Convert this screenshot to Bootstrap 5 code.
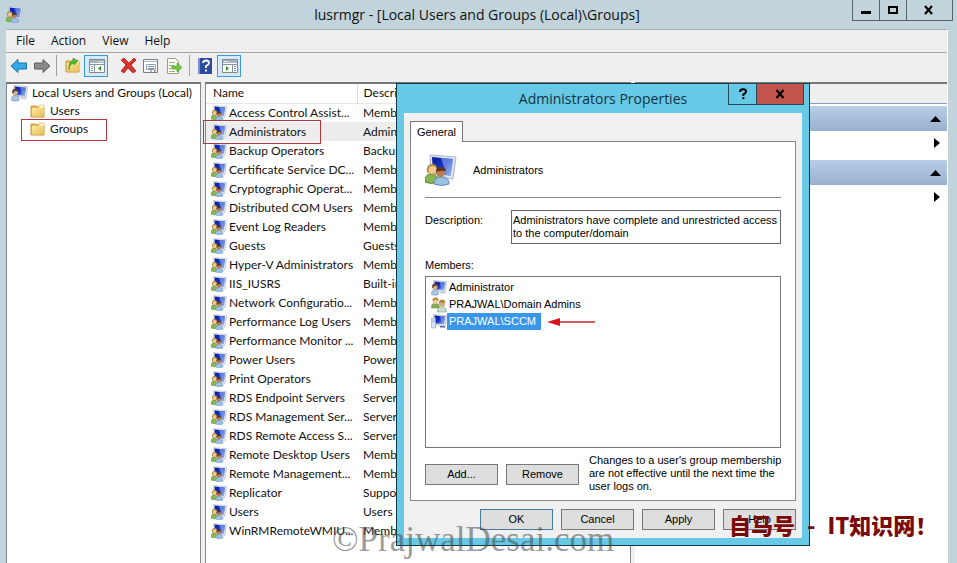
<!DOCTYPE html>
<html lang="en">
<head>
<meta charset="utf-8">
<meta name="viewport" content="width=device-width, initial-scale=1">
<title>lusrmgr</title>
<link href="https://cdn.jsdelivr.net/npm/bootstrap@5.3.0/dist/css/bootstrap.min.css" rel="stylesheet">
<style>
body{font-family:"Open Sans","Noto Sans",sans-serif;font-size:12px;line-height:18px;color:#111;background:#c1d4db;min-height:100vh}
button{font:inherit;color:inherit}
svg{display:block;flex:none}
.frame{padding:0 9px 0 6px}
.titlebar{height:29px;padding-right:17px}
.titlebar h1{font-size:14px;line-height:29px;font-weight:400}
.winbtns{position:absolute;right:4px;top:0}
.winbtns button{height:21px;width:28px;border:1px solid #56656b;border-top:0;margin-left:-1px;background:transparent;padding:0}
.winbtns button:last-child{width:47px}
.chrome{background:#efefef;border-top:1px solid #a4b2b8;border-right:1px solid #fff}
.menus{height:23px;border-bottom:1px solid #a5a5a5;gap:16px;padding-left:10px}
.menus button,.tools button{background:none;border:0;padding:0}
.tools{height:25px;margin-bottom:4px;padding:0 4px}
.tools button{width:23px;height:22px}
.tools .on{background:#d5ebfa;border:1px solid #3c9adb;width:24px}
.vsep{width:1px;height:21px;background:#a0a0a0}
.panes{background:#efefef;gap:4px;border-right:1px solid #fff}
.pane{background:#fff;border:1px solid #828790;border-bottom:0;border-top:2px solid #777}
.tree,.groups table{font-family:Lato,"Open Sans",sans-serif;font-size:12px;white-space:nowrap}
.tree{width:195px}
.tree ul{padding-left:4px}
.tree li a,.groups a{color:inherit;text-decoration:none}
.tree li a{gap:4px;height:18px}
.tree .leaf{margin-left:19px}
.redbox{outline:1px solid #b5363c}
.picked{margin-left:11px;margin-right:94px;height:20px}
.tree .picked .leaf{margin-left:8px}
.groups{width:426px}
.groups table{width:100%;table-layout:fixed;border-collapse:collapse}
.groups th{height:19px;font-weight:400;padding:0 0 0 7px;border-right:1px solid #dcdcdc;border-bottom:1px solid #e6e6e6}
.groups th+th{padding-left:6px}
.groups td{height:19px;padding:0 0 0 6px;white-space:nowrap;overflow:hidden}
.groups td:first-child{padding-left:5px}
.groups .cur{background:#ededed}
.callout{position:absolute;left:203px;top:120px;width:118px;height:24px;border:1px solid #b5363c;pointer-events:none}
.namecell{gap:2px;height:16px}
.actions{min-width:0}
.acthead{height:20px;background:#efefef;border-bottom:1px solid #8d9cb0;margin-bottom:2px}
.actbar{height:25px;background:linear-gradient(#b9cde6,#98b0cf)}
.actrow{height:29px;padding-bottom:5px}
.actbar button,.actrow button{border:0;background:none;padding:0 6px}
.dlg{position:absolute;left:396px;top:83px;width:414px;background:#67c9e5;border:1px solid #12394a;padding:0 7px 7px;font-family:"Liberation Sans",Arial,sans-serif;font-size:11px;line-height:13px;color:#000}
.dlg h2{font-family:"Open Sans","Noto Sans",sans-serif;font-size:14px;line-height:29px;height:29px;margin:0;color:#12333f}
.dlgbtns{position:absolute;top:-1px;right:5px}
.dlgbtns button{height:22px;width:29px;border:1px solid #264a57;background:transparent;margin-left:-1px;padding:0}
.dlgbtns button:last-child{width:48px;background:#c2564c}
.dlgbtns svg{margin:auto}
.dlgbody{background:#f0f0f0;padding:8px 6px}
.tab{width:53px;height:21px;background:#fff;border:1px solid #777;border-bottom:0;margin-bottom:-1px;position:relative;padding:0}
.sheet{background:#fff;border:1px solid #888;padding:11px 14px 7px}
.rule{height:1px;background:#888;margin:10px 0 12px}
.sheet textarea{width:270px;height:34px;border:1px solid #666;resize:none;padding:3px 0 3px 1px;font:inherit;line-height:13px;overflow:hidden;white-space:pre;border-radius:0;color:#000}
.mlabel{margin-top:15px}
.members{height:172px;border:1px solid #777;padding:2px 5px}
.members li{height:17px;gap:2px}
.members .sel{background:#3897ea;color:#fff;height:17px;line-height:17px;width:94px;padding-left:2px;margin-left:-2px}
.pbtn{width:73px;height:21px;background:#dedede;border:1px solid #777;padding:0;color:#000}
.pbtn.def{border-color:#4b7b9c}
.note{margin:-10px -8px 0 2px}
.mark1{position:absolute;left:332px;top:521px;font:35px/38px "Liberation Serif",serif;color:rgba(70,70,70,.55);white-space:nowrap}
.mark2{position:absolute;left:729px;top:510px;gap:12px;font:900 22px/28px "Noto Sans CJK SC",sans-serif;color:#7b0a0a;white-space:nowrap}
</style>
<script src="https://cdn.jsdelivr.net/npm/bootstrap@5.3.0/dist/js/bootstrap.bundle.min.js"></script>
</head>
<body class="overflow-hidden position-relative">
<svg width="0" height="0" class="position-absolute" aria-hidden="true">
<defs>
<linearGradient id="scr" x1="0" y1="0" x2="1" y2="1"><stop offset="0" stop-color="#0a1a96"/><stop offset=".5" stop-color="#1b34c4"/><stop offset="1" stop-color="#a9c4f5"/></linearGradient>
<linearGradient id="fold" x1="0" y1="0" x2="1" y2="1"><stop offset="0" stop-color="#fdeaa0"/><stop offset="1" stop-color="#e6bd55"/></linearGradient>
<symbol id="mon" viewBox="0 0 32 32"><path d="M5 1 31 3 29 23 7 22Z" fill="#dfe3ee" stroke="#9aa2ba"/><path d="M7 3 28 5 26 20 9 19Z" fill="url(#scr)"/><path d="M17 4 28 5 26 20 22 20Z" fill="#7fa3ee" opacity=".6"/><path d="M19 23h8l3 4H18z" fill="#c9ceda"/></symbol>
<symbol id="grp" viewBox="0 0 32 32"><path d="M5 1 31 3 28 25 6 22Z" fill="#dfe3ee" stroke="#b0b6c8"/><path d="M7 3 28 5 25.500 22 8 19Z" fill="url(#scr)"/><path d="M16 4 28 5 25.500 22 22 21Z" fill="#86a8f0" opacity=".65"/><path d="M0 28c0-7 3-8 6-8s7 2 7 8q-7 3-13 0z" fill="#86b552" stroke="#5b8a34"/><path d="M2 18q-1-8 5-8 5 0 5 5l-1 5-4 1z" fill="#b3893c"/><circle cx="7.500" cy="16" r="4" fill="#f0c890"/><path d="M9 30c0-6 4-7 8-7s7 2 7 7q-7 3-15 0z" fill="#9cc0e6" stroke="#5f8bb8"/><circle cx="15.500" cy="18.500" r="4.500" fill="#b97c4e"/><path d="M11 18q0-5 5-5 5 0 5 4-5-1-10 1z" fill="#573722"/></symbol>
<symbol id="usr" viewBox="0 0 32 32"><use href="#mon"/><path d="M1 29c0-8 3-10 7-10s7 3 7 10q-7 3-14 0z" fill="#a9c6e8" stroke="#6586ac"/><circle cx="8" cy="14" r="5" fill="#e0aa78"/><path d="M2 14q0-7 6-7 6 0 6 6-5-3-8-1l-2 5z" fill="#5a4238"/></symbol>
<symbol id="duo" viewBox="0 0 32 32"><path d="M1 22c0-9 4-10 8-10s8 3 8 10z" fill="#86ac55" stroke="#527a30"/><circle cx="9" cy="8" r="6" fill="#efcb95"/><path d="M3 8q0-7 6-7 7 0 6 7-5-4-9-1z" fill="#b58a32"/><path d="M13 30c0-9 4-11 9-11s9 3 9 11z" fill="#c9dccb" stroke="#708a70"/><circle cx="22" cy="13" r="6" fill="#dba878"/><path d="M16 13q0-8 6-8 7 0 6 8-5-4-12 0z" fill="#a98438"/></symbol>
<symbol id="pc" viewBox="0 0 32 32"><use href="#mon"/><rect x="1" y="8" width="8" height="20" rx="1" fill="#dbe4f3" stroke="#7a90b8"/><path d="M3 12h4M3 15h4" stroke="#4878c8"/><path d="M18 24h10v3H18z" fill="#5577b8"/></symbol>
<symbol id="folder" viewBox="0 0 16 16"><path d="M1 3h5l1 1h7v10H1z" fill="#e4bc5a" stroke="#c79b3e"/><path d="M9 2h5v4H9z" fill="#fff6cf" stroke="#cfae60" stroke-width=".6"/><path d="M2 5h12v8.500H2z" fill="url(#fold)"/></symbol>
<symbol id="arr" viewBox="0 0 18 16"><path d="M1 8 8 1.500V5H16.500V11H8V14.500Z" stroke-linejoin="round"/></symbol>
<symbol id="panel" viewBox="0 0 16 16"><path d="M.5 1.500h15v13H.5z" fill="#fff" stroke="#7d8894"/><path d="M1 2h14v3H1z" fill="#a6b3c2"/><path d="M10 3.500h1m1 0h2" stroke="#fff"/><path d="M1 6.500h14M5.500 6v8" stroke="#8793a0"/><path d="M2 8.500h2m-2 2h2m-2 2h2" stroke="#7d96b0"/></symbol>
</defs></svg>

<div class="frame d-flex flex-column vh-100">
<header class="titlebar d-flex align-items-center flex-shrink-0">
<svg width="17" height="17"><use href="#grp"/></svg>
<h1 class="m-0 flex-grow-1 text-center">lusrmgr - [Local Users and Groups (Local)\Groups]</h1>
</header>
<div class="winbtns d-flex">
<button type="button" aria-label="Minimize"><svg width="26" height="20"><path d="M8 12.500h10" stroke="#000" stroke-width="3"/></svg></button>
<button type="button" aria-label="Maximize"><svg width="26" height="20"><path d="M9 7h8v6h-8z" fill="none" stroke="#000" stroke-width="2"/></svg></button>
<button type="button" aria-label="Close"><svg width="45" height="20"><path d="m18 6 7 8m0-8-7 8" stroke="#000" stroke-width="2.200"/></svg></button>
</div>
<div class="chrome flex-shrink-0">
<nav class="menus d-flex align-items-center" aria-label="Menu"><button type="button">File</button><button type="button">Action</button><button type="button">View</button><button type="button">Help</button></nav>
<div class="tools d-flex align-items-center" role="toolbar" aria-label="Tools">
<button type="button" aria-label="Back"><svg width="18" height="16" fill="#35a8e6" stroke="#1772ae"><use href="#arr"/></svg></button>
<button type="button" aria-label="Forward"><svg width="18" height="16" viewBox="0 0 18 16"><path d="M17 8 10 1.500V5H1.500V11H10V14.500Z" fill="#8b8b8b" stroke="#5c5c5c" stroke-linejoin="round"/></svg></button>
<span class="vsep me-1"></span>
<button type="button" aria-label="Up" class="ps-1"><svg width="16" height="16" viewBox="0 0 16 16"><use href="#folder"/><path d="M4 12Q4 6 9 5V7L13 3 8 0V2Q3 4 4 12" fill="#54b52e" stroke="#2e8418" stroke-width=".5"/></svg></button>
<button type="button" aria-label="Show tree" class="on ps-1"><svg width="16" height="16" viewBox="0 0 16 16"><use href="#panel"/><path d="m12 8-3 2.500 3 2.500z" fill="#2d9c2d"/></svg></button>
<button type="button" aria-label="Delete" class="ms-2 ps-1"><svg width="17" height="17" viewBox="0 0 17 17"><path d="m1 3 3-2 5 5 5-5 2 2-5 5 5 6-3 2-5-5-4 5-3-2 5-6z" fill="#d9332c" stroke="#a01818" stroke-width=".7"/></svg></button>
<button type="button" aria-label="Properties" class="ms-1"><svg width="16" height="16" viewBox="0 0 16 16"><path d="M.5 1.500h14v13H.5z" fill="#fff" stroke="#73808c"/><path d="M1 3.500h13" stroke="#a6b3c2"/><path d="M3.500 6.500h9v5h-9z" fill="none" stroke="#90a3b5"/><path d="M5 8.500h6m-6 2h6" stroke="#7890a8"/><path d="M7 13h2m2 0h2" stroke="#566"/></svg></button>
<button type="button" aria-label="Export"><svg width="16" height="16" viewBox="0 0 16 16"><path d="M1.500.5h8l3 3v12h-11z" fill="#fffdf2" stroke="#95a08c"/><path d="M3 4.500h6m-6 3h5m-5 3h4m-4 3h6" stroke="#9cab9c"/><path d="M6 8h5V5l5 4.500-5 4.500V11H6z" fill="#71c93e" stroke="#3f9820" stroke-width=".6"/></svg></button>
<span class="vsep me-1"></span>
<button type="button" aria-label="Help" class="ps-1"><svg width="14" height="16" viewBox="0 0 14 16"><path d="M0 0h14v16H0z" fill="#2d4c9f"/><path d="M0 0h2v16H0z" fill="#8090c8"/><path d="M5 5q0-2.500 3-2.500 3 0 3 2.500 0 1.500-3 3v2m0 1.500v2" stroke="#fff" stroke-width="1.800" fill="none"/></svg></button>
<button type="button" aria-label="Show actions" class="on ps-1"><svg width="16" height="16" viewBox="0 0 16 16"><g transform="matrix(-1 0 0 1 16 0)"><use href="#panel"/></g><path d="m4 8 3 2.500L4 13z" fill="#2d9c2d"/></svg></button>
</div></div>
<div class="panes d-flex flex-grow-1 overflow-hidden">
<nav class="pane tree flex-shrink-0" aria-label="Tree"><ul class="list-unstyled m-0">
<li><a href="#" class="d-flex align-items-center"><svg width="17" height="17"><use href="#usr"/></svg>Local Users and Groups (Local)</a></li>
<li><a href="#" class="leaf d-flex align-items-center"><svg width="16" height="16"><use href="#folder"/></svg>Users</a></li>
<li class="redbox picked"><a href="#" class="leaf d-flex align-items-center"><svg width="16" height="16"><use href="#folder"/></svg>Groups</a></li>
</ul></nav>
<main class="pane groups flex-shrink-0"><table><colgroup><col style="width:151px"><col></colgroup><thead><tr><th>Name</th><th>Description</th></tr></thead><tbody id="rows"></tbody></table></main>
<aside class="pane actions flex-grow-1 border-start-0 border-end-0">
<div class="acthead"></div>
<div class="actbar d-flex justify-content-end align-items-center"><button type="button" aria-label="Collapse"><svg width="11" height="6"><path d="m0 6 5.500-6L11 6z"/></svg></button></div>
<div class="actrow d-flex justify-content-end"><button type="button" aria-label="More"><svg width="9" height="10"><path d="m2 0 6 5-6 5z"/></svg></button></div>
<div class="actbar d-flex justify-content-end align-items-center"><button type="button" aria-label="Collapse"><svg width="11" height="6"><path d="m0 6 5.500-6L11 6z"/></svg></button></div>
<div class="actrow d-flex justify-content-end"><button type="button" aria-label="More"><svg width="9" height="10"><path d="m2 0 6 5-6 5z"/></svg></button></div>
</aside>
</div></div>
<div class="callout"></div>

<section class="dlg" role="dialog" aria-labelledby="dt">
<h2 id="dt" class="text-center">Administrators Properties</h2>
<div class="dlgbtns d-flex"><button type="button" aria-label="Help"><svg width="10" height="12" viewBox="0 0 10 12"><path d="M2 4Q2 1.200 5 1.200T8 3.500Q8 5 5.300 6.500V8M5.300 9v2.200" fill="none" stroke="#000" stroke-width="2"/></svg></button><button type="button" aria-label="Close"><svg width="10" height="10"><path d="m1.500 1 7 8m0-8-7 8" stroke="#000" stroke-width="2.200"/></svg></button></div>
<div class="dlgbody">
<button type="button" class="tab d-block">General</button>
<div class="sheet">
<div class="d-flex align-items-center"><svg width="32" height="34"><use href="#grp"/></svg><span class="ms-3">Administrators</span></div>
<div class="rule"></div>
<div class="d-flex justify-content-between"><label for="desc" class="pt-1">Description:</label><textarea id="desc" readonly>Administrators have complete and unrestricted access
to the computer/domain</textarea></div>
<div class="mlabel">Members:</div>
<ul class="members list-unstyled mb-3 mt-1">
<li class="d-flex align-items-center"><svg width="16" height="16"><use href="#usr"/></svg>Administrator</li>
<li class="d-flex align-items-center"><svg width="16" height="16"><use href="#duo"/></svg>PRAJWAL\Domain Admins</li>
<li class="d-flex align-items-center"><svg width="16" height="16"><use href="#pc"/></svg><span class="sel">PRAJWAL\SCCM</span><svg class="ms-1" width="48" height="10"><path d="M8 5h40" stroke="#c4272b" stroke-width="1.500"/><path d="m0 5 13-4v8z" fill="#d8151b"/></svg></li>
</ul>
<div class="d-flex gap-2"><button type="button" class="pbtn flex-shrink-0">Add...</button><button type="button" class="pbtn flex-shrink-0">Remove</button><div class="note">Changes to a user's group membership are not effective until the next time the user logs on.</div></div>
</div>
<div class="d-flex gap-2 justify-content-end mt-2"><button type="button" class="pbtn def">OK</button><button type="button" class="pbtn">Cancel</button><button type="button" class="pbtn">Apply</button><button type="button" class="pbtn">Help</button></div>
</div></section>
<div class="mark1">©PrajwalDesai.com</div>
<div class="mark2 d-flex" lang="zh"><span>自马号</span><span>-</span><span>IT知识网！</span></div>
<script>
const groups=[["Access Control Assist...","Members"],["Administrators","Administrators"],["Backup Operators","Backup Operators"],["Certificate Service DC...","Members"],["Cryptographic Operat...","Members"],["Distributed COM Users","Members"],["Event Log Readers","Members"],["Guests","Guests"],["Hyper-V Administrators","Members"],["IIS_IUSRS","Built-in"],["Network Configuratio...","Members"],["Performance Log Users","Members"],["Performance Monitor ...","Members"],["Power Users","Power Users"],["Print Operators","Members"],["RDS Endpoint Servers","Servers"],["RDS Management Ser...","Servers"],["RDS Remote Access S...","Servers"],["Remote Desktop Users","Members"],["Remote Management...","Members"],["Replicator","Supports"],["Users","Users are"],["WinRMRemoteWMIU...","Members"]];
document.getElementById("rows").innerHTML=groups.map(([n,d],i)=>`<tr class="${i===1?"cur":""}"><td><a href="#" class="namecell d-flex align-items-center"><svg width="16" height="16"><use href="#grp"/></svg>${n}</a></td><td>${d}</td></tr>`).join("");
</script>
</body>
</html>
